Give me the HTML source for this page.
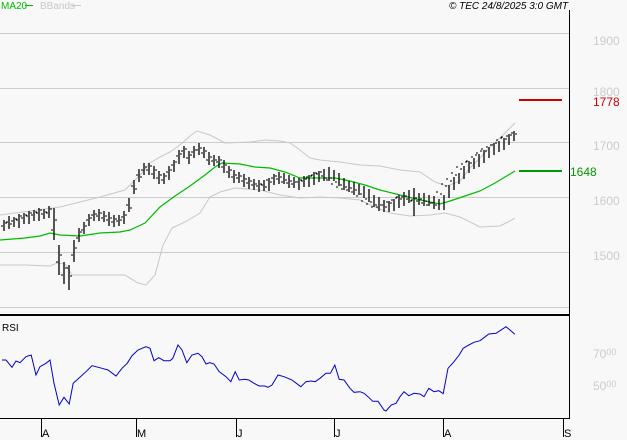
<!DOCTYPE html>
<html><head><meta charset="utf-8"><style>
html,body{margin:0;padding:0;background:#f8f8f8;}
svg{display:block;font-family:"Liberation Sans",sans-serif;}
</style></head><body>
<svg width="627" height="440" viewBox="0 0 627 440" xmlns="http://www.w3.org/2000/svg">
<rect width="627" height="440" fill="#f8f8f8"/>
<g stroke="#cccccc" stroke-width="1">
<line x1="0" y1="33.5" x2="569" y2="33.5"/>
<line x1="0" y1="88.5" x2="569" y2="88.5"/>
<line x1="0" y1="142.5" x2="569" y2="142.5"/>
<line x1="0" y1="197.5" x2="569" y2="197.5"/>
<line x1="0" y1="252.5" x2="569" y2="252.5"/>
<line x1="0" y1="307.5" x2="569" y2="307.5"/>
</g>
<line x1="0" y1="315" x2="569" y2="315" stroke="#000" stroke-width="2"/>
<line x1="569.5" y1="10" x2="569.5" y2="419" stroke="#000" stroke-width="1"/>
<line x1="0" y1="418.5" x2="569" y2="418.5" stroke="#000" stroke-width="1"/>
<g stroke="#000" stroke-width="1">
<line x1="41.5" y1="419" x2="41.5" y2="437"/>
<line x1="136.5" y1="419" x2="136.5" y2="437"/>
<line x1="236.5" y1="419" x2="236.5" y2="437"/>
<line x1="334.5" y1="419" x2="334.5" y2="437"/>
<line x1="443.5" y1="419" x2="443.5" y2="437"/>
<line x1="563.5" y1="419" x2="563.5" y2="437"/>
</g>
<g font-size="11" fill="#000">
<text x="42" y="437">A</text><text x="137" y="437">M</text><text x="237" y="437">J</text><text x="335" y="437">J</text><text x="444" y="437">A</text><text x="564" y="437">S</text>
</g>
<text x="1" y="9" font-size="10" fill="#00bb00">MA20</text>
<line x1="25" y1="5.5" x2="33" y2="5.5" stroke="#00bb00" stroke-width="1"/>
<text x="40" y="9" font-size="10" fill="#c8c8c8">BBands</text>
<line x1="72" y1="5.5" x2="81" y2="5.5" stroke="#c8c8c8"/>
<text x="449" y="9" font-size="10" font-style="italic" fill="#000">© TEC 24/8/2025 3:0 GMT</text>
<text x="2" y="331" font-size="10" fill="#000">RSI</text>
<g font-size="12" fill="#cccccc">
<text x="593" y="45">1900</text>
<text x="593" y="96">1800</text><text x="593" y="150">1700</text><text x="593" y="205">1600</text><text x="593" y="260">1500</text>
<text x="593" y="358">70<tspan font-size="9" dy="-3">00</tspan></text>
<text x="593" y="390">50<tspan font-size="9" dy="-3">00</tspan></text>
</g>
<line x1="519" y1="100" x2="562" y2="100" stroke="#cc0000" stroke-width="2"/>
<text x="593" y="106" font-size="12" fill="#cc0000">1778</text>
<line x1="519" y1="171" x2="562" y2="171" stroke="#009900" stroke-width="2"/>
<text x="570" y="176" font-size="12" fill="#009900">1648</text>
<polyline fill="none" stroke="#c8c8c8" stroke-width="1" points="0,215 30,211 60,207 100,197 125,190 140,175 150,163 160,157 170,152 180,145 190,136 197,131 210,135 225,143 250,142 265,140 280,141 290,143 300,150 310,158 320,160 340,162 360,165 380,166 400,170 420,172 435,182 447,186 460,181 470,168 480,158 490,147 500,138 508,130 515,123"/>
<polyline fill="none" stroke="#c8c8c8" stroke-width="1" points="0,265 25,265 50,266 57,263 65,264 72,275 100,275 125,275 138,283 146,285 155,275 163,245 172,228 185,222 200,213 210,197 220,192 235,188 260,190 280,195 300,198 320,197 340,198 360,200 375,207 390,213 410,216 430,215 445,213 460,217 480,227 500,226 508,222 515,218"/>
<polyline fill="none" stroke="#00bb00" stroke-width="1.2" points="0,240 25,238 40,236 50,233 60,235 80,236 100,233 120,232 130,230 145,223 160,207 175,196 190,186 205,175 215,167 222,163 240,164 255,167 270,168 285,172 300,178 320,178 335,178 350,181 365,185 380,190 400,195 420,200 440,204 450,201 465,196 480,191 495,183 505,177 515,171"/>
<path fill="none" stroke="#000" stroke-width="1.3" d="M4,220v11M9,216v13M14,217v10M19,214v14M24,213v11M29,211v13M34,210v11M39,208v13M44,209v10M49,206v12M54,208v32M59,245v30M64,262v22M69,265v25M74,240v22M79,228v14M84,222v12M89,214v12M94,210v11M99,209v12M104,211v11M109,212v14M114,215v12M119,215v11M124,211v13M129,198v14M134,180v14M139,169v13M144,163v12M149,163v12M154,166v13M159,171v13M164,173v11M169,166v14M174,160v12M179,150v14M184,146v12M189,151v13M194,146v12M199,143v12M204,147v11M209,152v13M214,155v11M219,156v12M224,160v13M229,166v12M234,170v13M239,172v11M244,174v13M249,177v12M254,179v11M259,180v12M264,180v11M269,178v13M274,174v11M279,172v12M284,173v11M289,175v13M294,177v11M299,178v12M304,176v11M309,175v12M314,172v13M319,171v11M324,169v12M329,167v14M334,170v11M339,173v13M344,178v12M349,181v11M354,182v13M359,184v11M364,186v12M369,189v13M374,195v12M379,197v14M384,200v12M389,201v11M394,199v12M399,195v13M404,192v14M409,190v13M414,188v28M419,193v12M424,193v13M429,195v11M434,196v13M439,199v11M444,195v15M449,185v13M454,177v13M459,173v11M464,166v13M469,161v12M474,158v11M479,154v13M484,150v13M489,147v11M494,143v12M499,141v11M504,138v12M509,134v11M514,131v10"/>
<path fill="none" stroke="#000" stroke-width="1" d="M1,226h2M5,223h2M6,222h2M10,224h2M11,221h2M15,219h2M16,220h2M20,216h2M21,218h2M25,215h2M26,216h2M30,213h2M31,215h2M35,212h2M36,213h2M40,210h2M41,214h2M45,212h2M46,213h2M50,209h2M51,230h2M55,220h2M56,262h2M60,255h2M61,275h2M65,268h2M66,268h2M70,276h2M71,255h2M75,248h2M76,238h2M80,232h2M81,230h2M85,226h2M86,220h2M90,218h2M91,215h2M95,214h2M96,216h2M100,213h2M101,218h2M105,216h2M106,220h2M110,218h2M111,222h2M115,219h2M116,221h2M120,220h2M121,217h2M125,215h2M126,205h2M130,208h2M131,186h2M135,189h2M136,175h2M140,177h2M141,170h2M145,167h2M146,170h2M150,166h2M151,174h2M155,170h2M156,178h2M160,175h2M161,180h2M165,176h2M166,172h2M170,170h2M171,165h2M175,162h2M176,156h2M180,154h2M181,151h2M185,149h2M186,158h2M190,155h2M191,152h2M195,150h2M196,150h2M200,148h2M201,153h2M205,151h2M206,160h2M210,157h2M211,161h2M215,160h2M216,162h2M220,160h2M221,167h2M225,165h2M226,172h2M230,170h2M231,177h2M235,175h2M236,178h2M240,176h2M241,181h2M245,179h2M246,183h2M250,181h2M251,185h2M255,184h2M256,186h2M260,184h2M261,185h2M265,187h2M266,180h2M270,182h2M271,178h2M275,176h2M276,179h2M280,177h2M281,182h2M285,180h2M286,183h2M290,181h2M291,184h2M295,182h2M296,182h2M300,180h2M301,181h2M305,179h2M306,177h2M310,176h2M311,175h2M315,173h2M316,174h2M320,172h2M321,176h2M325,178h2M326,180h2M330,178h2M331,184h2M335,182h2M336,187h2M340,185h2M341,189h2M345,187h2M346,190h2M350,188h2M351,192h2M355,190h2M356,196h2M360,194h2M361,201h2M365,199h2M366,204h2M370,202h2M371,207h2M375,205h2M376,207h2M380,205h2M381,205h2M385,207h2M386,202h2M390,203h2M391,200h2M395,198h2M396,197h2M400,199h2M401,197h2M405,196h2M406,199h2M410,201h2M411,200h2M415,198h2M416,201h2M420,199h2M421,203h2M425,201h2M426,205h2M430,203h2M431,203h2M435,205h2M436,192h2M440,194h2M441,184h2M445,186h2M446,179h2M450,181h2M451,173h2M455,175h2M456,167h2M460,169h2M461,164h2M465,162h2M466,161h2M470,163h2M471,157h2M475,155h2M476,153h2M480,151h2M481,149h2M485,151h2M486,147h2M490,145h2M491,145h2M495,143h2M496,140h2M500,138h2M501,137h2M505,139h2M506,136h2M510,135h2M511,133h2M515,134h2"/>
<polyline fill="none" stroke="#0000cc" stroke-width="1" points="2.0,360.0 6.0,360.0 12.0,367.3 16.0,361.0 20.0,362.7 26.0,356.7 31.2,355.0 36.0,375.0 40.0,366.7 46.0,363.3 50.0,360.0 54.0,383.3 59.2,405.0 64.0,397.3 69.2,404.0 73.2,383.3 86.0,371.7 92.0,365.7 102.0,368.3 108.0,370.0 116.0,376.0 122.0,368.3 127.2,363.3 132.0,355.7 138.0,350.0 146.0,346.7 150.0,348.3 154.0,360.7 158.8,357.7 164.0,360.7 170.0,360.7 172.8,358.3 178.0,345.0 182.0,350.0 186.8,362.7 192.0,355.0 198.0,353.3 202.0,356.7 206.0,364.0 210.0,362.7 214.0,364.0 219.2,371.7 226.0,376.7 230.8,381.7 235.2,371.7 239.2,380.0 244.8,379.3 248.8,380.0 254.0,383.3 259.2,386.0 264.8,386.0 268.0,387.3 272.0,385.0 278.0,375.0 284.0,376.7 292.0,380.0 300.8,386.7 306.0,381.7 311.2,381.0 315.2,381.7 320.0,378.3 326.0,373.3 330.4,373.3 334.8,365.0 339.2,379.3 344.0,380.0 350.0,388.3 354.0,392.3 360.0,391.7 364.0,393.3 368.0,396.7 372.8,401.3 378.0,401.3 384.0,410.0 386.0,411.0 391.2,405.0 396.0,403.3 400.0,396.7 404.0,391.7 408.8,395.7 414.0,393.3 420.0,394.0 424.0,396.7 428.8,388.3 434.0,391.7 438.8,390.7 443.2,393.7 448.0,368.3 454.0,361.7 459.2,355.0 463.2,348.3 468.8,345.0 474.0,342.3 480.0,340.7 484.0,337.7 488.8,334.0 496.0,333.3 500.0,330.7 506.0,326.7 510.0,330.0 514.8,334.3"/>
</svg>
</body></html>
